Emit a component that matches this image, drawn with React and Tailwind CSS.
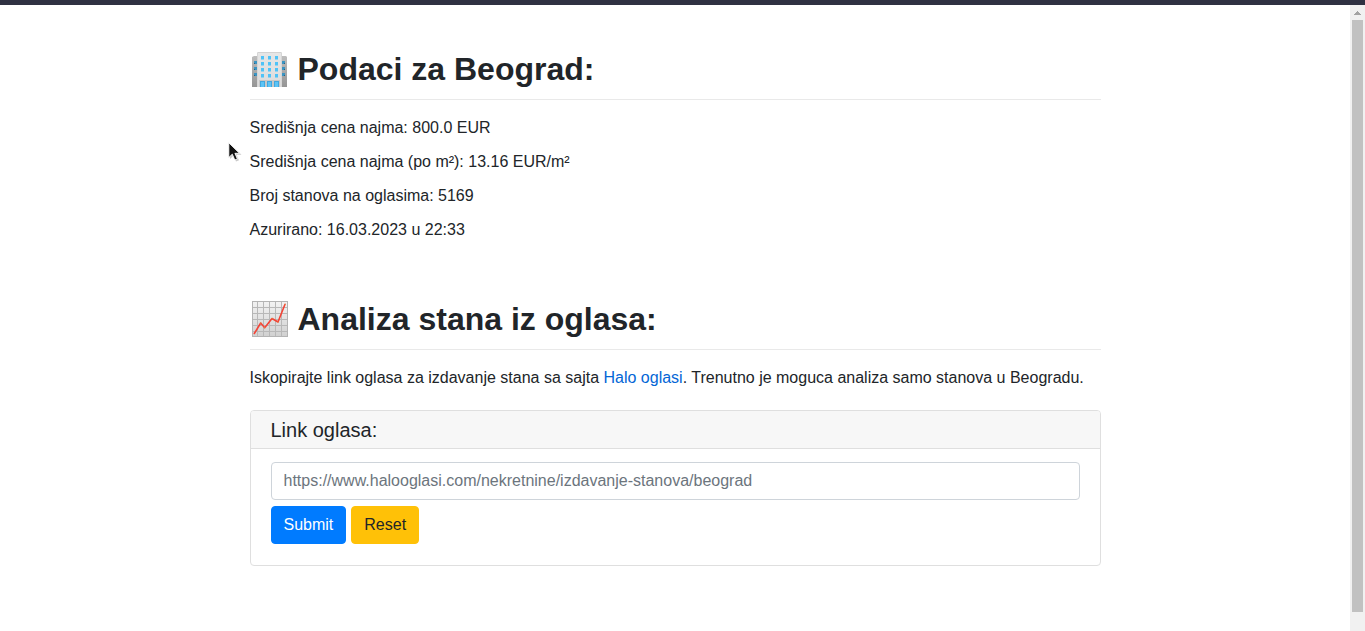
import React from "react";

function BuildingIcon() {
  const rows = [5, 11, 17, 23];
  return (
    <svg viewBox="0 0 36 36" className="size-9 shrink-0" aria-hidden="true">
      <defs>
        <linearGradient id="front" x1="0" y1="0" x2="0" y2="1">
          <stop offset="0" stopColor="#e6e6e6" />
          <stop offset="1" stopColor="#dcdcdc" />
        </linearGradient>
        <linearGradient id="side" x1="0" y1="0" x2="0" y2="1">
          <stop offset="0" stopColor="#bdbdbd" />
          <stop offset="1" stopColor="#959595" />
        </linearGradient>
      </defs>
      <path d="M0 6 L2 5 H34 L35 6 V36 H0 Z" fill="url(#side)" />
      {[10, 16, 22].map((y) => (
        <g key={y} fill="#3a94c2">
          <rect x="2" y={y} width="3" height="3" />
          <rect x="30" y={y} width="3" height="3" />
          <path d={`M2 ${y + 2}h1v1H2zM32 ${y + 2}h1v1h-1z`} fill="#285f82" />
        </g>
      ))}
      <path d="M5 2 L6 1 H29 L30 2 V36 H5 Z" fill="url(#front)" />
      <path d="M5 2 L6 1 H29 L30 2 Z" fill="#d2d2d2" />
      <path d="M5 2h1v34H5zM29 2h1v34h-1z" fill="#d6d6d6" />
      {rows.map((y) => (
        <path
          key={y}
          d={`M9 ${y}h3v3.500H9zM16 ${y}h3v3.500h-3zM23 ${y}h3v3.500h-3z`}
          fill="#4fc3f7"
        />
      ))}
      <path d="M7 29h21v7H7z" fill="#c8c8c8" />
      <path d="M8 30h5v6H8zM15 30h5v6h-5zM22 30h5v6h-5z" fill="#42a8df" />
      <path d="M9 31h3v5H9zM16 31h3v5h-3zM23 31h3v5h-3z" fill="#5cc4f6" />
    </svg>
  );
}

function ChartIcon() {
  return (
    <svg viewBox="0 0 36 36" className="size-9 shrink-0" aria-hidden="true">
      <defs>
        <linearGradient id="paper" x1="0" y1="0" x2="0" y2="1">
          <stop offset="0" stopColor="#f3f3f3" />
          <stop offset="1" stopColor="#d0d0d0" />
        </linearGradient>
      </defs>
      <rect width="36" height="36" fill="url(#paper)" />
      <path
        d="M5.500 0v36M11.500 0v36M17.500 0v36M23.500 0v36M29.500 0v36M0 6.500h36M0 12.500h36M0 18.500h36M0 24.500h36M0 30.500h36"
        stroke="#b8b8b8"
      />
      <rect x=".5" y=".5" width="35" height="35" fill="none" stroke="#b4b4b4" />
      <path
        d="M2.300 32.500 L8.700 22 L12.700 26.700 L20 17.500 L26 21 L33 3.300"
        fill="none"
        stroke="#f44336"
        strokeWidth="1.600"
        strokeLinecap="round"
        strokeLinejoin="round"
      />
      <path
        d="M8.200 22h1M12.200 26.700h1M19.500 17.500h1M25.500 21h1M32.500 3.500h1"
        stroke="#d98b45"
        strokeWidth="1.200"
      />
    </svg>
  );
}

function SectionHeading({ icon, children }) {
  return (
    <h2 className="flex items-center gap-2.5 border-b border-[#e9e9e9] pb-2.5 pl-0.5 text-[32px] leading-10 font-bold">
      {icon}
      <span>{children}</span>
    </h2>
  );
}

function Scrollbar() {
  return (
    <div className="flex w-[15px] shrink-0 flex-col items-center bg-[#f1f1f1]" aria-hidden="true">
      <div className="flex h-[15px] items-center justify-center">
        <svg viewBox="0 0 7 4" className="h-1 w-[7px]">
          <path d="M3 0h1v1h1v1h1v1h1v1H0V3h1V2h1V1h1z" fill="#a3a3a3" />
        </svg>
      </div>
      <div className="mb-[19px] w-[11px] flex-1 bg-[#c1c1c1]" />
    </div>
  );
}

function Pointer() {
  return (
    <svg
      viewBox="0 0 14 20"
      className="pointer-events-none absolute top-[142px] left-[228px] h-5 w-3.5"
      aria-hidden="true"
    >
      <path
        d="M1 1v15l3.500-3.300L7 18.500l3-1.300-2.500-5.400h5z"
        fill="#888"
        opacity=".45"
        transform="translate(1 1)"
      />
      <path
        d="M.8 .8v14.700l3.500-3.300L6.800 18l2.600-1.100-2.500-5.600h4.600z"
        fill="#111"
        stroke="#fff"
        strokeWidth=".9"
      />
    </svg>
  );
}

const stats = [
  "Središnja cena najma: 800.0 EUR",
  "Središnja cena najma (po m²): 13.16 EUR/m²",
  "Broj stanova na oglasima: 5169",
  "Azurirano: 16.03.2023 u 22:33",
];

export default function App() {
  return (
    <div className="relative flex min-h-screen flex-col bg-white font-['Liberation_Sans',Arial,sans-serif] text-base text-[#212529]">
      <div className="h-[5px] bg-[#2f3142]" />
      <div className="flex flex-1">
        <main className="flex-1 pt-11 pb-16">
          <div className="mx-auto max-w-[851px]">
            <section>
              <SectionHeading icon={<BuildingIcon />}>Podaci za Beograd:</SectionHeading>
              <div className="mt-4 flex flex-col gap-2.5">
                {stats.map((line) => (
                  <p key={line}>{line}</p>
                ))}
              </div>
            </section>

            <section className="mt-[57px]">
              <SectionHeading icon={<ChartIcon />}>Analiza stana iz oglasa:</SectionHeading>
              <p className="mt-4">
                Iskopirajte link oglasa za izdavanje stana sa sajta{" "}
                <a href="https://www.halooglasi.com" className="text-[#0366d6]">
                  Halo oglasi
                </a>
                . Trenutno je moguca analiza samo stanova u Beogradu.
              </p>
              <form
                className="mt-5 rounded border border-[#dfdfdf]"
                onSubmit={(event) => event.preventDefault()}
              >
                <div className="rounded-t-[3px] border-b border-[#dfdfdf] bg-[#f7f7f7] px-5 pt-[7px] pb-1.5">
                  <label htmlFor="listing" className="block text-xl leading-6">
                    Link oglasa:
                  </label>
                </div>
                <div className="px-5 pt-[13px] pb-[21px]">
                  <input
                    id="listing"
                    type="url"
                    placeholder="https://www.halooglasi.com/nekretnine/izdavanje-stanova/beograd"
                    className="block h-[38px] w-full rounded border border-[#ced4da] bg-white px-3 placeholder:text-[#6c757d]"
                  />
                  <div className="mt-1.5 flex gap-[5px]">
                    <button
                      type="submit"
                      className="h-[38px] rounded border border-[#007bff] bg-[#007bff] px-3 text-white"
                    >
                      Submit
                    </button>
                    <button
                      type="reset"
                      className="h-[38px] rounded border border-[#ffc107] bg-[#ffc107] px-3"
                    >
                      Reset
                    </button>
                  </div>
                </div>
              </form>
            </section>
          </div>
        </main>
        <Scrollbar />
      </div>
      <Pointer />
    </div>
  );
}
